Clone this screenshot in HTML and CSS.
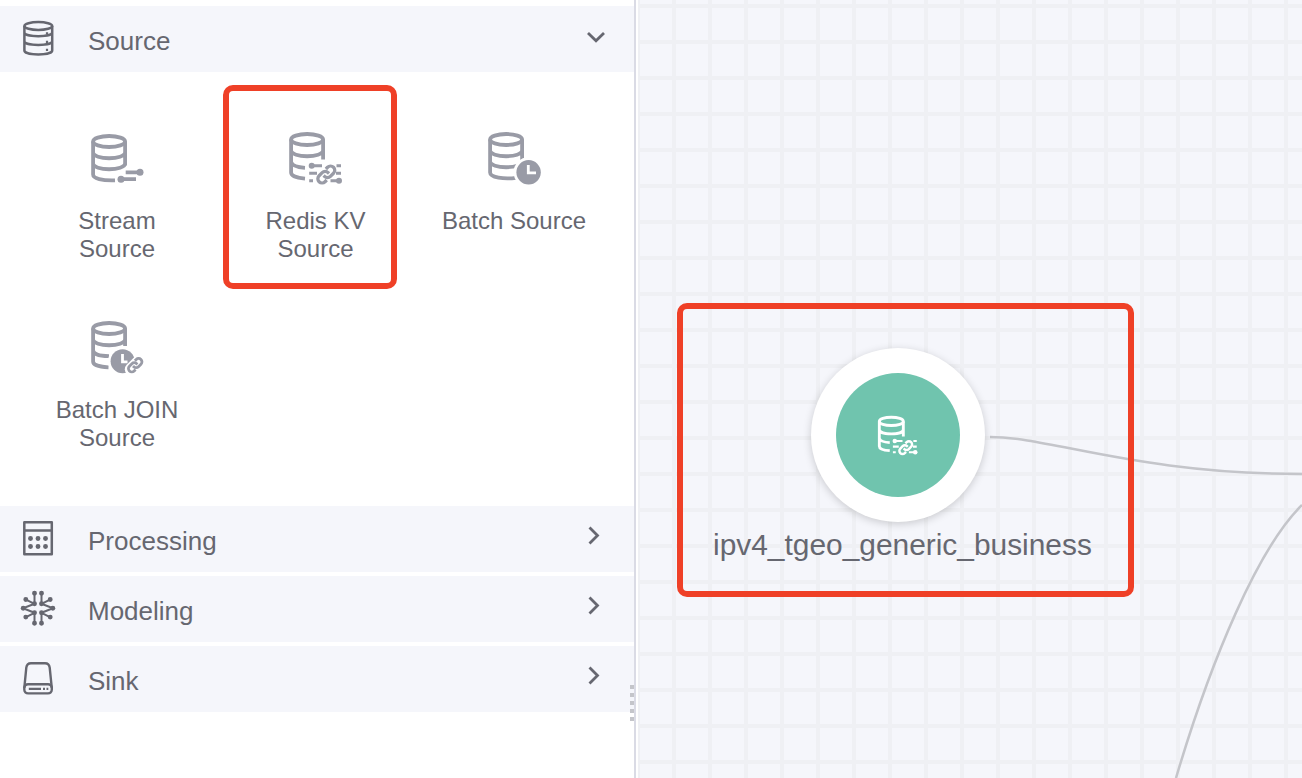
FILE: index.html
```html
<!DOCTYPE html>
<html lang="en">
<head>
<meta charset="utf-8">
<title>Pipeline editor</title>
<link rel="stylesheet" href="styles.css">
</head>
<body>
<svg class="defs" aria-hidden="true">
  <symbol id="link" viewBox="-12 -12 24 24" overflow="visible">
    <g transform="rotate(-45)" fill="none" stroke-linecap="butt">
      <path d="M-3.600 4.200H-6a4.200 4.200 0 0 1 0-8.400H-1.600a4.200 4.200 0 0 1 4.200 4.200V1.200"/>
      <path d="M3.600-4.200H6a4.200 4.200 0 0 1 0 8.400H1.600A4.200 4.200 0 0 1-2.600 0V-1.200"/>
    </g>
  </symbol>
  <symbol id="redis" viewBox="0 0 56 56">
    <g fill="none" stroke="currentColor" stroke-width="3.8">
      <ellipse cx="19.1" cy="8.5" rx="16" ry="5.5"/>
      <path d="M3.1 8.5V41.5C3.1 44.900 9 47 17 47.600M35.100 8.500V28.500M3.100 19.300C3.100 27.200 35.100 27.200 35.100 19.300M3.100 31C4 34.500 9 36.300 17 36.800"/>
      <path stroke-width="2.900" d="M24 34.700H34M48.500 34.700H53M21.200 42.200H29M48 42.200H53M21.200 49.700H25M42.500 49.700H51"/>
    </g>
    <circle cx="23.700" cy="34.700" r="3" fill="currentColor"/>
    <circle cx="51" cy="49.700" r="3" fill="currentColor"/>
    <use href="#link" x="26.300" y="31.500" width="24" height="24" stroke="currentColor" stroke-width="3.300"/>
  </symbol>
</svg>
<div class="app">
  <aside class="sidebar">
    <section class="group">
      <header class="bar">
        <svg class="bar-icon" viewBox="0 0 36 36" fill="none" stroke="currentColor" stroke-width="2.500">
          <ellipse cx="18.300" cy="6" rx="13.900" ry="3.900"/>
          <path d="M4.400 6V30.500C4.400 35.700 32.200 35.700 32.200 30.500V6M4.400 12.500C4.400 17.400 32.200 17.400 32.200 12.500M4.400 21.300C4.400 26.200 32.200 26.200 32.200 21.300"/>
          <path stroke-width="2.200" d="M27 12.200v2.200M27 20.700v2.200M27 28.700v2.200"/>
        </svg>
        <span class="bar-title">Source</span>
        <svg class="chevron" viewBox="0 0 20 20"><path d="M4 7 12 14.700 20 7"/></svg>
      </header>
      <div class="items">
        <div class="item">
          <svg class="item-icon low" viewBox="0 0 56 56">
            <g fill="none" stroke="currentColor" stroke-width="3.800">
              <ellipse cx="19.100" cy="8.500" rx="16" ry="5.500"/>
              <path d="M3.100 8.500V41.500C3.100 45.500 12 47.700 25 47.300M35.100 8.500V32.500M3.100 19.300C3.100 27.200 35.100 27.200 35.100 19.300M3.100 30.300C3.100 38.200 35.100 38.200 35.100 30.300"/>
              <path d="M31 46.200H46M35.700 39.300H50"/>
            </g>
            <circle cx="31" cy="46.200" r="3.500" fill="currentColor"/><circle cx="50" cy="39.300" r="3.500" fill="currentColor"/>
          </svg>
          <span class="item-label">Stream<br>Source</span>
        </div>
        <div class="item">
          <svg class="item-icon redis"><use href="#redis"/></svg>
          <span class="item-label">Redis KV<br>Source</span>
        </div>
        <div class="item">
          <svg class="item-icon" viewBox="0 0 56 56">
            <g fill="none" stroke="currentColor" stroke-width="3.800">
              <ellipse cx="19.100" cy="8.500" rx="16" ry="5.500"/>
              <path d="M3.100 8.500V41.500C3.100 46.500 17 48.500 29 46.800M35.100 8.500V30M3.100 19.300C3.100 27.200 35.100 27.200 35.100 19.300M3.100 30.300C3.100 38.200 35.100 38.200 35.100 30.300"/>
            </g>
            <circle cx="41.600" cy="41.300" r="15" fill="#fff"/><circle cx="41.600" cy="41.300" r="12.200" fill="currentColor"/>
            <path d="M41.300 34V41.800H49" fill="none" stroke="#fff" stroke-width="2.800"/>
          </svg>
          <span class="item-label">Batch Source</span>
        </div>
        <div class="item">
          <svg class="item-icon" viewBox="0 0 56 56">
            <g fill="none" stroke="currentColor" stroke-width="3.800">
              <ellipse cx="19.100" cy="8.500" rx="16" ry="5.500"/>
              <path d="M3.100 8.500V41.500C3.100 44.900 10 47 18.500 47.300M35.100 8.500V26M3.100 19.300C3.100 27.200 35.100 27.200 35.100 19.300M3.100 30.300C3.100 34 9 36.200 19 36.200"/>
            </g>
            <circle cx="32.600" cy="41.300" r="14.500" fill="#fff"/><circle cx="32.600" cy="41.300" r="12" fill="currentColor"/>
            <path d="M32.500 34V41.800H37.500" fill="none" stroke="#fff" stroke-width="2.800"/>
            <g transform="translate(45.200 45.200) scale(.8)">
              <path d="M-5 5 5-5" stroke="#fff" stroke-width="16" stroke-linecap="round"/>
              <use href="#link" x="-12" y="-12" width="24" height="24" stroke="currentColor" stroke-width="3.500"/>
            </g>
          </svg>
          <span class="item-label">Batch JOIN<br>Source</span>
        </div>
      </div>
    </section>
    <header class="bar">
      <svg class="bar-icon" viewBox="0 0 36 36" fill="none" stroke="currentColor" stroke-width="2.500">
        <path stroke-linejoin="round" d="M4.300 2.300H31.800V34.200H4.300ZM4.300 10.500H31.800"/>
        <path stroke-width="4.900" stroke-linecap="round" d="M10.500 18.500h.01M18 18.500h.01M25.500 18.500h.01M10.500 26.500h.01M18 26.500h.01M25.500 26.500h.01"/>
      </svg>
      <span class="bar-title">Processing</span>
      <svg class="chevron right" viewBox="0 0 20 20"><path d="M7.500 2.500 15.500 10.500 7.500 18.500"/></svg>
    </header>
    <header class="bar">
      <svg class="bar-icon" viewBox="0 0 36 36" fill="none" stroke="currentColor" stroke-width="2">
        <path d="M14.500 3.300V13.800L5.500 9.300M21.500 3.300V13.800L30.500 9.300M14.500 33.300V22.800L5.500 27.300M21.500 33.300V22.800L30.500 27.300M14.500 13.800 3 18.300 14.500 22.800M21.500 13.800 33 18.300 21.500 22.800"/>
        <path stroke-width="4.900" stroke-linecap="round" d="M14.500 3.300h.01M21.500 3.300h.01M14.500 33.300h.01M21.500 33.300h.01M5.800 9.500h.01M30.200 9.500h.01M5.800 27.100h.01M30.200 27.100h.01M3.200 18.300h.01M32.800 18.300h.01M14.500 13.800h.01M21.500 13.800h.01M14.500 22.800h.01M21.500 22.800h.01"/>
      </svg>
      <span class="bar-title">Modeling</span>
      <svg class="chevron right" viewBox="0 0 20 20"><path d="M7.500 2.500 15.500 10.500 7.500 18.500"/></svg>
    </header>
    <header class="bar">
      <svg class="bar-icon" viewBox="0 0 36 36" fill="none" stroke="currentColor" stroke-width="2.400">
        <path d="M4.300 28 6.300 7.700Q6.800 3.200 11 3.200H25Q29.200 3.200 29.700 7.700L31.800 28"/>
        <rect x="4.300" y="24.200" width="27.500" height="9.200" rx="3.800"/>
        <path stroke-width="2.200" d="M8.800 28.800H21M23 28.800H25M26.500 28.800H28.300"/>
      </svg>
      <span class="bar-title">Sink</span>
      <svg class="chevron right" viewBox="0 0 20 20"><path d="M7.500 2.500 15.500 10.500 7.500 18.500"/></svg>
    </header>
    <div class="mark mark-item"></div>
    <div class="grip"><i></i><i></i><i></i><i></i><i></i></div>
  </aside>
  <main class="canvas">
    <svg class="edges" viewBox="0 0 664 778">
      <path d="M352 437C412 437 500 474 664 474M664 505C620 548 573 660 538 778"/>
    </svg>
    <div class="node">
      <div class="node-ring"><div class="node-core"><svg class="node-icon"><use href="#redis"/></svg></div></div>
      <span class="node-label">ipv4_tgeo_generic_business</span>
    </div>
    <div class="mark mark-node"></div>
  </main>
</div>
</body>
</html>
```
FILE: styles.css
```css
* { box-sizing: border-box; }
body {
  margin: 0;
  background: #fff;
  color: #666770;
  font-family: "Liberation Sans", Arial, sans-serif;
}
svg { display: block; }
.defs { position: absolute; width: 0; height: 0; }
.app {
  display: flex;
  gap: 2px;
  width: 1302px;
  height: 778px;
  overflow: hidden;
}
.sidebar {
  position: relative;
  display: flex;
  flex-direction: column;
  gap: 4px;
  width: 636px;
  flex: none;
  padding-top: 6px;
  border-right: 2px solid #dadbe5;
}
.group { height: 496px; }
.bar {
  display: flex;
  align-items: center;
  height: 66px;
  flex: none;
  padding: 0 30px 0 20px;
  background: #f5f6fb;
}
.bar-icon { width: 36px; height: 36px; margin-bottom: 2px; }
.bar-title {
  flex: 1;
  margin-left: 32px;
  padding-top: 4px;
  font-size: 26px;
  line-height: 30px;
}
.chevron {
  width: 20px;
  height: 20px;
  margin-bottom: 6px;
  fill: none;
  stroke: currentColor;
  stroke-width: 2.8;
  overflow: visible;
}
.chevron.right { margin-bottom: 8px; margin-right: 2px; }
.items {
  display: grid;
  grid-template-columns: repeat(3, 198.5px);
  grid-auto-rows: 189px;
  padding: 59px 0 0 17.75px;
}
.item { display: flex; flex-direction: column; align-items: center; }
.item-icon {
  width: 56px;
  height: 56px;
  margin-left: 1.5px;
  color: #999ba6;
}
.item-icon.redis { margin-left: 1px; }
.item-icon.low { margin-top: 2px; margin-bottom: -2px; }
.item-label {
  margin-top: 20px;
  font-size: 24px;
  line-height: 28px;
  text-align: center;
  white-space: nowrap;
}
.grip {
  position: absolute;
  left: 630px;
  top: 685px;
  display: grid;
  gap: 4px;
}
.grip i { width: 4px; height: 4px; background: #c4c5ca; }
.canvas {
  position: relative;
  flex: 1;
  background-color: #f5f6fb;
  background-image:
    linear-gradient(90deg, #eff0f4 4px, transparent 4px),
    linear-gradient(#eff0f4 4px, transparent 4px);
  background-size: 36px 36px;
  background-position: -2px 4px;
}
.edges { position: absolute; inset: 0; width: 664px; height: 778px; }
.edges path { fill: none; stroke: #c4c5ca; stroke-width: 2.5; }
.node {
  position: absolute;
  left: 75px;
  top: 348px;
  width: 380px;
}
.node-ring {
  display: grid;
  place-items: center;
  width: 174px;
  height: 174px;
  margin-left: 98px;
  border-radius: 50%;
  background: #fff;
  box-shadow: 0 2px 8px rgba(0, 0, 0, .18);
}
.node-core {
  display: grid;
  place-items: center;
  width: 124px;
  height: 124px;
  border-radius: 50%;
  background: #70c4ae;
}
.node-icon { width: 42px; height: 42px; color: #fff; margin-top: 2px; }
.node-label {
  display: block;
  margin-top: 5px;
  font-size: 29.9px;
  line-height: 36px;
  white-space: nowrap;
}
.mark {
  position: absolute;
  border: 6px solid #ef4027;
  border-radius: 10px;
}
.mark-item { left: 223px; top: 85px; width: 174px; height: 204px; }
.mark-node { left: 39px; top: 303px; width: 457px; height: 294px; }
```
